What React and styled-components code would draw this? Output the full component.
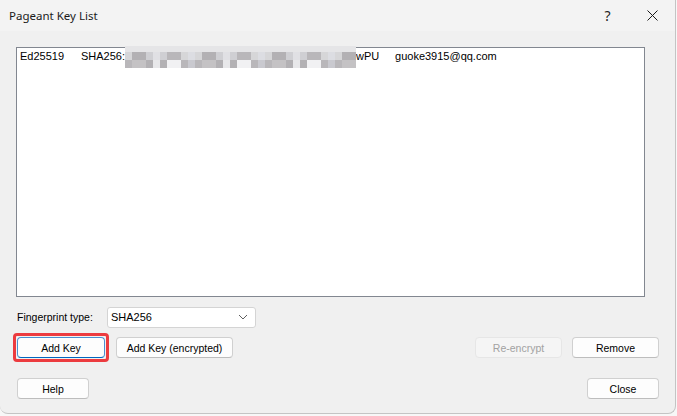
import React from 'react'
import styled, { createGlobalStyle } from 'styled-components'

const GlobalStyle = createGlobalStyle`
  html, body {
    margin: 0;
    padding: 0;
    background: #f7f7f7;
  }
  body {
    font-family: "Liberation Sans", Arial, sans-serif;
    font-size: 11px;
    color: #000;
  }
`

const Window = styled.div`
  width: 676px;
  height: 414px;
  background: #f0f0f0;
  border-right: 1px solid #c4c4c4;
  border-bottom: 1px solid #c4c4c4;
  border-radius: 0 0 8px 8px;
  display: flex;
  flex-direction: column;
  box-sizing: border-box;
  overflow: hidden;
`

const TitleBar = styled.div`
  height: 31px;
  flex: none;
  background: #f3f3f3;
  display: flex;
  align-items: center;
  padding-left: 9px;
  font-family: "Noto Sans", "Open Sans", sans-serif;
  font-size: 11.5px;
  color: #1a1a1a;
`

const Title = styled.span`
  flex: 1;
`

const Caption = styled.span`
  width: 45px;
  display: flex;
  justify-content: center;
  align-items: center;
  font-size: 14px;
  color: #222;
`

const Body = styled.div`
  flex: 1;
  display: flex;
  flex-direction: column;
  padding: 16px 16px 0 16px;
`

const KeyList = styled.div`
  width: 629px;
  height: 250px;
  box-sizing: border-box;
  border: 1px solid #828790;
  background: #fff;
  padding: 1px 3px;
`

const KeyRow = styled.div`
  display: flex;
  align-items: center;
  height: 14px;
  white-space: nowrap;
`

const Cell = styled.span`
  width: ${p => p.$w}px;
  flex: none;
`

const Redacted = styled.svg`
  flex: none;
  position: relative;
  top: 1px;
  display: block;
`

const FieldRow = styled.div`
  margin-top: 10px;
  height: 20px;
  display: flex;
  align-items: center;
  padding-left: 1px;
`

const Label = styled.span`
  width: 90px;
  font-size: 10.5px;
`

const Select = styled.div`
  width: 149px;
  height: 21px;
  box-sizing: border-box;
  background: #fff;
  border: 1px solid #d4d4d4;
  border-radius: 3px;
  display: flex;
  align-items: center;
  justify-content: space-between;
  padding: 0 7px 0 3px;
  font-size: 11px;
`

const ButtonRow = styled.div`
  margin-top: ${p => p.$top}px;
  display: flex;
  align-items: center;
  padding-left: 1px;
`

const Spacer = styled.div`
  flex: 1;
`

const Highlight = styled.div`
  margin: -4px -4px -4px -4px;
  padding: 1px;
  border: 3px solid #ec3b3f;
  border-radius: 4px;
  display: flex;
`

const Button = styled.button`
  width: ${p => p.$w}px;
  height: 21px;
  margin-left: ${p => p.$gap || 0}px;
  box-sizing: border-box;
  background: ${p => p.disabled ? '#f5f5f5' : '#fdfdfd'};
  border: 1px solid ${p => p.$focus ? '#4d8fd0' : p.disabled ? '#e6e6e6' : '#d0d0d0'};
  border-bottom-color: ${p => p.$focus ? '#0067c0' : p.disabled ? '#e6e6e6' : '#bdbdbd'};
  border-radius: 4px;
  font-family: "Liberation Sans", Arial, sans-serif;
  font-size: 10.5px;
  color: ${p => p.disabled ? '#a2a2a2' : '#000'};
  padding: 0;
  cursor: default;
`

const shades = ['#d6d6d8', '#c4c2c4', '#e8e8ea', '#b9b7ba', '#dcdde2', '#cfcfd3', '#f1f1f3', '#c9c9cf', '#b3b1b4', '#e0e0e4']

const Blur = () => {
  const cols = 33
  const cells = []
  for (let c = 0; c < cols; c++) {
    for (let r = 0; r < 2; r++) {
      const idx = (c * 7 + r * 3 + (c * c) % 5) % shades.length
      cells.push(<rect key={c + '-' + r} x={c * 7} y={6 + r * 8} width="7" height="8" fill={shades[idx]} />)
    }
  }
  return (
    <Redacted width="231" height="22" viewBox="0 0 231 22">
      <rect x="0" y="0" width="231" height="6" fill="#e5e5e7" />
      {cells}
    </Redacted>
  )
}

const Chevron = () => (
  <svg width="10" height="6" viewBox="0 0 10 6">
    <path d="M1 1 L5 5 L9 1" fill="none" stroke="#5f5f5f" strokeWidth="1" />
  </svg>
)

const CloseGlyph = () => (
  <svg width="11" height="11" viewBox="0 0 11 11">
    <path d="M0.5 0.5 L10.5 10.5 M10.5 0.5 L0.5 10.5" fill="none" stroke="#1a1a1a" strokeWidth="1" />
  </svg>
)

export default function App() {
  return (
    <>
      <GlobalStyle />
      <Window>
        <TitleBar>
          <Title>Pageant Key List</Title>
          <Caption>?</Caption>
          <Caption><CloseGlyph /></Caption>
        </TitleBar>
        <Body>
          <KeyList>
            <KeyRow>
              <Cell $w={61}>Ed25519</Cell>
              <span>SHA256:</span>
              <Blur />
              <Cell $w={39}>wPU</Cell>
              <span>guoke3915@qq.com</span>
            </KeyRow>
          </KeyList>
          <FieldRow>
            <Label>Fingerprint type:</Label>
            <Select>
              <span>SHA256</span>
              <Chevron />
            </Select>
          </FieldRow>
          <ButtonRow $top={10}>
            <Highlight>
              <Button $w={88} $focus>Add Key</Button>
            </Highlight>
            <Button $w={117} $gap={11}>Add Key (encrypted)</Button>
            <Spacer />
            <Button $w={87} disabled>Re-encrypt</Button>
            <Button $w={87} $gap={10}>Remove</Button>
          </ButtonRow>
          <ButtonRow $top={20}>
            <Button $w={72}>Help</Button>
            <Spacer />
            <Button $w={72}>Close</Button>
          </ButtonRow>
        </Body>
      </Window>
    </>
  )
}
